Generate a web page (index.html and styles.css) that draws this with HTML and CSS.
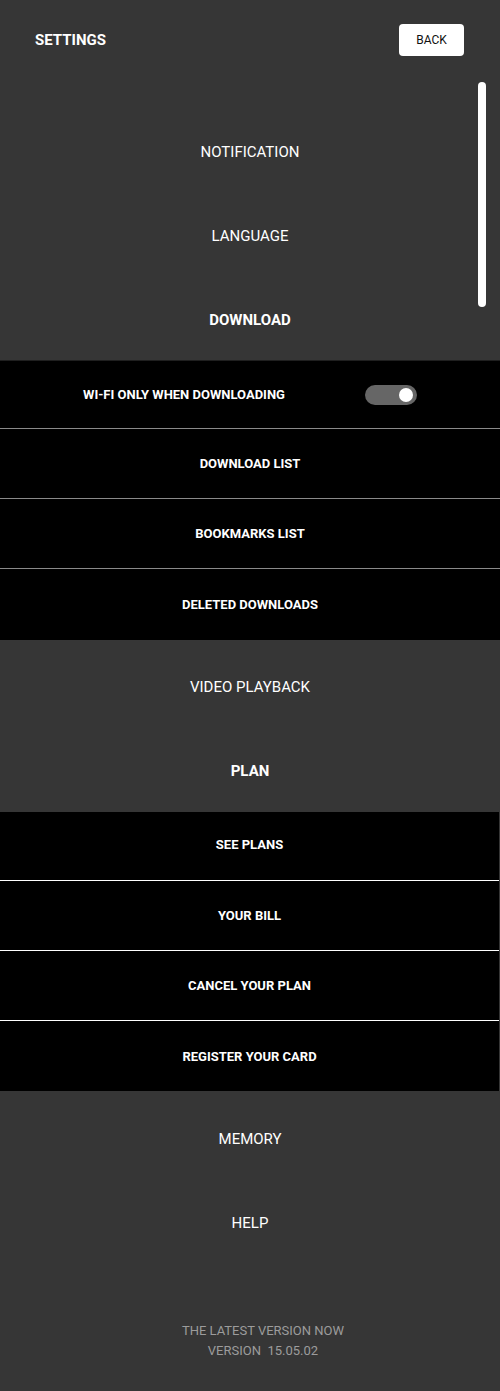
FILE: index.html
```html
<!DOCTYPE html>
<html lang="en">
<head>
<meta charset="utf-8">
<title>Settings</title>
<link rel="stylesheet" href="styles.css">
</head>
<body>
<div class="page">
  <header class="header">
    <h1 class="title">SETTINGS</h1>
    <button class="back">BACK</button>
  </header>
  <div class="scrollbar"></div>

  <nav class="menu menu-top">
    <div class="item">NOTIFICATION</div>
    <div class="item">LANGUAGE</div>
    <div class="item item-bold">DOWNLOAD</div>
  </nav>

  <section class="group group-download">
    <div class="row row-toggle">
      <span>WI-FI ONLY WHEN DOWNLOADING</span>
      <span class="toggle"><span class="knob"></span></span>
    </div>
    <div class="row">DOWNLOAD LIST</div>
    <div class="row">BOOKMARKS LIST</div>
    <div class="row">DELETED DOWNLOADS</div>
  </section>

  <nav class="menu menu-mid">
    <div class="item">VIDEO PLAYBACK</div>
    <div class="item item-bold">PLAN</div>
  </nav>

  <section class="group group-plan">
    <div class="row">SEE PLANS</div>
    <div class="row">YOUR BILL</div>
    <div class="row">CANCEL YOUR PLAN</div>
    <div class="row">REGISTER YOUR CARD</div>
  </section>

  <nav class="menu menu-bottom">
    <div class="item">MEMORY</div>
    <div class="item">HELP</div>
  </nav>

  <footer class="footer">
    <div>THE LATEST VERSION NOW</div>
    <div>VERSION&nbsp;&nbsp;15.05.02</div>
  </footer>
</div>
</body>
</html>
```

FILE: styles.css
```css
html, body {
  margin: 0;
  padding: 0;
  background: #363636;
}

.page {
  position: relative;
  width: 500px;
  min-height: 1391px;
  background: #363636;
  font-family: Roboto, "Liberation Sans", Arial, sans-serif;
  color: #ffffff;
}

.header {
  height: 80px;
  display: flex;
  align-items: center;
  justify-content: space-between;
  padding: 0 36px 0 35px;
  box-sizing: border-box;
}

.title {
  margin: 0;
  font-size: 15px;
  font-weight: 700;
  letter-spacing: 0;
}

.back {
  width: 65px;
  height: 32px;
  border: none;
  border-radius: 4px;
  background: #ffffff;
  color: #111111;
  font-family: Roboto, "Liberation Sans", Arial, sans-serif;
  font-size: 12px;
  font-weight: 400;
  padding: 0;
  cursor: pointer;
}

.scrollbar {
  position: absolute;
  left: 478px;
  top: 82px;
  width: 8px;
  height: 225px;
  border-radius: 4px;
  background: #ffffff;
}

.menu {
  display: flex;
  flex-direction: column;
}

.menu-top {
  padding-top: 30px;
}

.menu-top .item-bold {
  height: 82px;
  padding-top: 1px;
  box-sizing: border-box;
}

.menu-mid {
  padding-top: 5px;
}

.menu-mid .item-bold {
  height: 83px;
}

.menu-bottom {
  padding-top: 6px;
}

.item {
  height: 84px;
  display: flex;
  align-items: center;
  justify-content: center;
  font-size: 15px;
  font-weight: 400;
}

.item-bold {
  font-weight: 700;
}

.group {
  background: #000000;
  display: flex;
  flex-direction: column;
}

.row {
  height: 69px;
  display: flex;
  align-items: center;
  justify-content: center;
  font-size: 13px;
  font-weight: 700;
  border-bottom: 1px solid #8a8a8a;
}

.row:last-child {
  border-bottom: none;
}

.group-download {
  border-top: 1px solid #1f1f1f;
}

.group-download .row:first-child {
  height: 67px;
}

.group-download .row:last-child {
  height: 71px;
}

.group-plan {
  margin-right: 1px;
}

.group-plan .row {
  border-bottom-color: #ffffff;
}

.group-plan .row:first-child {
  height: 65px;
  padding-bottom: 3px;
}

.group-plan .row:last-child {
  height: 70px;
}

.row-toggle {
  gap: 80px;
}

.toggle {
  position: relative;
  width: 52px;
  height: 20px;
  border-radius: 10px;
  background: #666666;
  flex-shrink: 0;
}

.knob {
  position: absolute;
  right: 4px;
  top: 3px;
  width: 14px;
  height: 14px;
  border-radius: 50%;
  background: #ffffff;
}

.footer {
  margin-top: 56px;
  padding: 0 0 31px 26px;
  display: flex;
  flex-direction: column;
  align-items: center;
  font-size: 13px;
  line-height: 20px;
  color: #9c9c9c;
}
```
